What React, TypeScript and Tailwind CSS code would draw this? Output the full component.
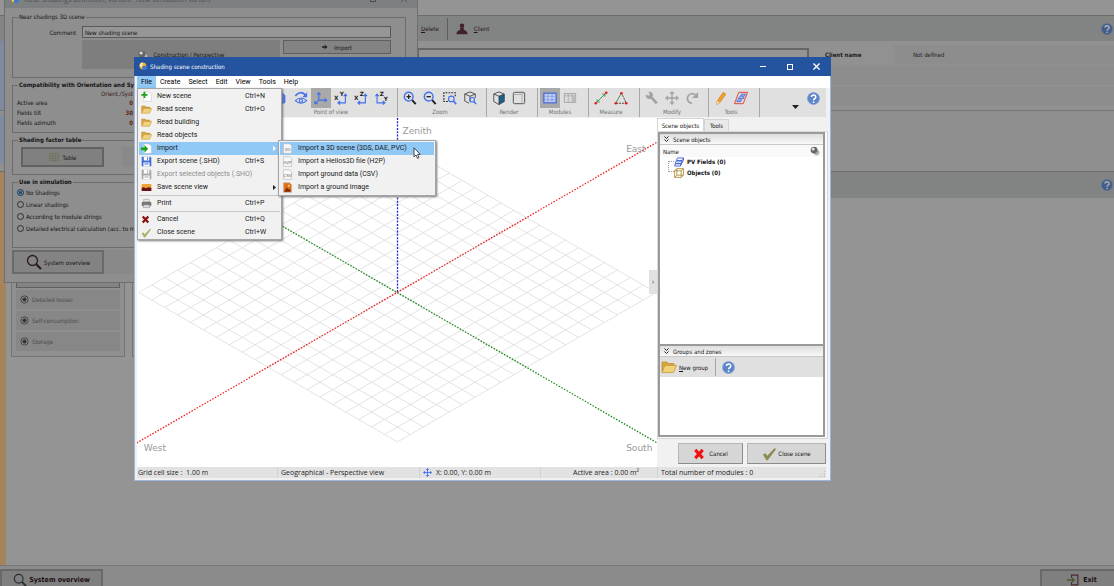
import { ReactNode } from "react"
import clsx from "clsx"

const TAHOMA = "font-['DejaVu_Sans_Condensed','DejaVu_Sans',sans-serif] text-[6px]"
const SEGOE = "font-['Open_Sans','Noto_Sans',sans-serif] text-[7px]"
const MENU = "font-[Roboto,'Open_Sans',sans-serif] text-[7px]"

/* ---------- icons ---------- */

function Icon({ children, className = "size-3.5", box = 16 }: { children: ReactNode; className?: string; box?: number }) {
  return (
    <svg
      className={clsx("shrink-0", className)}
      viewBox={`0 0 ${box} ${box}`}
      fill="none"
      stroke="currentColor"
      strokeWidth={1.3}
      aria-hidden="true"
    >
      {children}
    </svg>
  )
}

const HelpIcon = ({ className = "size-3" }: { className?: string }) => (
  <Icon className={className}>
    <circle cx="8" cy="8" r="7.4" fill="#5d86c8" stroke="#8aa6d2" strokeWidth="1" />
    <path d="M5.4 6.2a2.7 2.5 0 1 1 4 2.1C8.500 8.900 8.100 9.300 8.100 10.300M8.100 11.700v1.700" stroke="#fff" strokeWidth="1.900" />
  </Icon>
)

const AppIcon = ({ className = "size-[9px]" }: { className?: string }) => (
  <Icon className={className}>
    <circle cx="7" cy="7" r="6" fill="#f2ab2e" stroke="none" />
    <path d="M7 1a6 6 0 0 0-6 6l3 3 3-4z" fill="#fbe3a0" stroke="none" />
    <path d="M6 7h9v4a5 5 0 0 1-9 1z" fill="#3a78c8" stroke="none" />
  </Icon>
)

const SphereIcon = ({ className = "size-2.5" }: { className?: string }) => (
  <Icon className={className}>
    <circle cx="10.500" cy="10.500" r="4.500" fill="#b5b5b5" stroke="none" />
    <circle cx="6.500" cy="6.500" r="5.500" fill="#666" stroke="none" />
    <circle cx="5" cy="4.800" r="2.500" fill="#ddd" stroke="none" />
  </Icon>
)

const MagnifierIcon = ({ className = "size-4" }: { className?: string }) => (
  <Icon className={className}>
    <circle cx="6.500" cy="6.500" r="5" strokeWidth="1.300" />
    <path d="M10.200 10.200l4.800 4.800" strokeWidth="2.200" />
  </Icon>
)

const FolderIcon = ({ className = "size-[11px]" }: { className?: string }) => (
  <Icon className={className}>
    <path d="M1 13V3h5l1.500 1.500H13V7" fill="#d9a441" stroke="#c08f30" strokeWidth=".8" />
    <path d="M1 13.500L4 6.500h11.500l-3 7z" fill="#f0d27c" stroke="#c8993a" strokeWidth=".8" />
  </Icon>
)

const NewSceneIcon = () => (
  <Icon className="size-[11px]">
    <path d="M4 1.500h8l3 3V15H4z" fill="#fff" stroke="#c4c4c4" strokeWidth=".8" />
    <path d="M5 1v9M.5 5.500h9" stroke="#1fa01f" strokeWidth="2.600" />
  </Icon>
)

const ImportIcon = () => (
  <Icon className="size-[11px]">
    <path d="M4 1.500h8l3 3V15H4z" fill="#fff" stroke="#c4c4c4" strokeWidth=".8" />
    <path d="M0 6.500h5V3l5.500 5.500L5 14v-3.500H0z" fill="#1fa01f" stroke="none" />
  </Icon>
)

const FloppyIcon = ({ className }: { className?: string }) => (
  <Icon className={clsx("size-[11px]", className)}>
    <path d="M1 1h12.500L15 2.500V15H1z" fill="currentColor" stroke="none" />
    <path d="M4 1h8v5.500H4zM3.500 9.500h9V15h-9z" fill="#fff" stroke="none" />
    <path d="M9.500 2v3.500M5 11.500h6" strokeWidth="1.500" />
  </Icon>
)

const PictureIcon = () => (
  <Icon className="size-[11px]">
    <path d="M1 3h14v10H1z" fill="#f0a030" stroke="none" />
    <path d="M1 8.500l3-1 3 1.500 4-1.500 4 1V13H1z" fill="#6b1414" stroke="none" />
  </Icon>
)

const PrinterIcon = () => (
  <Icon className="size-[11px]">
    <path d="M4 2h8v4H4z" fill="#e8e8e8" stroke="#999" strokeWidth=".8" />
    <rect x="1" y="5.500" width="14" height="6.500" rx="2" fill="#777" stroke="none" />
    <path d="M3.500 10h9v4h-9z" fill="#ddd" stroke="#888" strokeWidth=".8" />
  </Icon>
)

const CrossIcon = ({ className }: { className?: string }) => (
  <Icon className={className}>
    <path d="M3 2.500l10 11M13 2.500l-10 11" strokeWidth="4" />
  </Icon>
)

const CheckIcon = ({ className }: { className?: string }) => (
  <Icon className={className}>
    <path d="M1 8.500l3-1.500 2 3L14.500 1 16 2.500 6.500 15H5z" fill="currentColor" stroke="none" />
  </Icon>
)

const FileTag = ({ tag }: { tag: string }) => (
  <Icon className="size-[11px]">
    <path d="M2 1h9l3 3v11H2z" fill="#f7f7f7" stroke="#bbb" strokeWidth="1" />
    <text x="8" y="11.500" textAnchor="middle" fontSize="6" fill="#666" stroke="none" fontFamily="DejaVu Sans">{tag}</text>
  </Icon>
)

const GroundImageIcon = () => (
  <Icon className="size-[11px]">
    <path d="M2 1h9l3 3v11H2z" fill="#e07018" stroke="#c9b9a9" strokeWidth="1" />
    <path d="M3 14l4-6 3 3 2-1.500V14z" fill="#7c2b10" stroke="none" />
    <circle cx="10" cy="5.500" r="1.500" fill="#ffd27a" stroke="none" />
  </Icon>
)

const UserIcon = () => (
  <Icon className="size-3 text-[#3f2329]">
    <circle cx="8" cy="3.800" r="3" fill="currentColor" stroke="none" />
    <path d="M5 6.800h6L10 9q5 1 5.500 6H.5Q1 10 6 9z" fill="currentColor" stroke="none" />
  </Icon>
)

const ExitIcon = () => (
  <Icon className="size-3">
    <path d="M6 5V1.500h8.500v13H6V11" stroke="#4a2a2a" strokeWidth="1.500" />
    <path d="M0 8h9M6.500 5L9.500 8l-3 3" stroke="#4f5630" strokeWidth="1.800" />
  </Icon>
)

const PvFieldsIcon = () => (
  <Icon className="size-2.5 text-[#2d4fd0]">
    <path d="M5.500 1.500H15l-1.500 4H4zM3.500 6.500H13L11.500 10H2zM2 11h9.500L10 14.500H1zM15 1.500v4L10 14.500" strokeWidth="1.300" />
  </Icon>
)

const ObjectsIcon = () => (
  <Icon className="size-2.5 text-[#a8872c]">
    <path d="M1 4.500h10.500V15H1zM1 4.500L4.500 1H15v10.500L11.500 15M15 1l-3.500 3.500M4.500 1v10.500H15M4.500 11.500L1 15" strokeWidth="1.300" />
  </Icon>
)

const MoveIcon = ({ className = "size-3.5" }: { className?: string }) => (
  <Icon className={className}>
    <path d="M8 2v12M2 8h12" strokeWidth="1.600" />
    <path d="M8 0l3 3.500H5zM8 16l3-3.500H5zM0 8l3.500-3v6zM16 8l-3.500-3v6z" fill="currentColor" stroke="none" />
  </Icon>
)

const axisText = { fontSize: 6.5, fill: "#222", stroke: "none", fontFamily: "DejaVu Sans", fontWeight: 700 }

function AxisIcon({ a, b, flip }: { a: string; b: string; flip?: boolean }) {
  return (
    <Icon>
      <g className="text-[#4470ea]">
        {flip ? (
          <path d="M3.500 4v9.500H12M1.500 6l2-2.500 2 2.500M10 11.500l2.500 2-2.500 2" />
        ) : (
          <path d="M13 4v9.500H5M11 6l2-2.500L15 6M7 11.500l-2.500 2 2.500 2" />
        )}
      </g>
      <text x={6.500} y="5.500" {...axisText}>{b}</text>
      <text x={flip ? 11 : 0} y={flip ? 11 : 10.500} {...axisText}>{a}</text>
    </Icon>
  )
}

const povIcons = [
  {
    label: "Rotate",
    icon: <Icon className="size-3.5 text-[#4470ea]"><path d="M3 3l2 0v4l5-5 3 3v8l-3 2H5z" fill="currentColor" stroke="none" /></Icon>,
  },
  {
    label: "Orbit",
    icon: (
      <Icon className="size-3.5 text-[#4470ea]">
        <path d="M1.500 5.500Q7-1 13 4.500" strokeWidth="2" />
        <path d="M15 1.500V7H9.500z" fill="currentColor" stroke="none" />
        <path d="M1.500 11Q8 5 14.500 11 8 17 1.500 11z" strokeWidth="1.200" />
        <circle cx="8" cy="11" r="1.800" />
      </Icon>
    ),
  },
  {
    label: "Perspective",
    active: true,
    icon: (
      <Icon className="size-3.5 text-[#4470ea]">
        <path d="M5.500 2.500v8h8.500M5.500 10.500l-4 3.500M3.500 4.500l2-2.500 2 2.500M12 8.500l2.500 2-2.500 2M1 11.500V14.500h3.200" />
      </Icon>
    ),
  },
  { label: "Top view", icon: <AxisIcon a="X" b="Y" /> },
  { label: "Front view", icon: <AxisIcon a="X" b="Z" /> },
  { label: "Side view", icon: <AxisIcon a="Y" b="Z" flip /> },
]

const Lens = ({ children }: { children: ReactNode }) => (
  <Icon>
    <circle cx="6.500" cy="6.500" r="5" stroke="#4470ea" strokeWidth="1.600" />
    <path d="M10.500 10.500l4 4.500" stroke="#222" strokeWidth="2.200" />
    {children}
  </Icon>
)

const zoomIcons = [
  { label: "Zoom in", icon: <Lens><path d="M6.500 4v5M4 6.500h5" stroke="#222" strokeWidth="1.500" /></Lens> },
  { label: "Zoom out", icon: <Lens><path d="M4 6.500h5" stroke="#222" strokeWidth="1.500" /></Lens> },
  {
    label: "Zoom to window",
    icon: (
      <Icon>
        <path d="M5.500 12H1V2h13v4" stroke="#222" strokeDasharray="2 1.300" />
        <circle cx="9.500" cy="9" r="3.200" stroke="#4470ea" />
        <path d="M12 11.500l3 3.500" stroke="#4470ea" strokeWidth="1.800" />
      </Icon>
    ),
  },
  {
    label: "Zoom to scene",
    icon: (
      <Icon>
        <path d="M7 14L2 11.500v-8L8 1l6 2.500V8M2 3.500L8 6l6-2.500M8 6v6" stroke="#444" strokeWidth="1" />
        <circle cx="10.500" cy="10" r="2.600" stroke="#4470ea" />
        <path d="M12.500 12l2.500 3" stroke="#4470ea" strokeWidth="1.600" />
      </Icon>
    ),
  },
]

const renderIcons = [
  {
    label: "Shaded",
    icon: (
      <Icon>
        <path d="M8 6l6-2.500v8.500L8 15.500z" fill="#17638c" stroke="none" />
        <path d="M2 3.500L8 1l6 2.500v8.500l-6 3.500-6-3.500zM2 3.500l6 2.500v9.500M8 6l6-2.500" stroke="#333" strokeWidth=".9" />
      </Icon>
    ),
  },
  {
    label: "Wireframe",
    icon: (
      <Icon>
        <rect x="1.500" y="1.500" width="13" height="13" rx="1.500" stroke="#444" strokeWidth="1" />
        <path d="M1.500 4h10v10.500M11.500 4l3-2.500" stroke="#999" strokeWidth=".8" />
      </Icon>
    ),
  },
]

const moduleIcons = [
  {
    label: "Show modules",
    active: true,
    icon: (
      <Icon>
        <rect x="1" y="2.500" width="14" height="11" fill="#c3d0f3" stroke="#3b63d8" />
        <path d="M1 6h14M1 10h14M5.700 2.500v11M10.300 2.500v11" stroke="#6d8be0" strokeWidth=".7" />
      </Icon>
    ),
  },
  {
    label: "Module layout",
    icon: (
      <Icon>
        <rect x="1.500" y="3" width="13" height="10" fill="#dcdcdc" stroke="#a2a2a2" strokeWidth="1" />
        <path d="M1.500 5.500h13M6 3v10M10.500 3v10" stroke="#a2a2a2" strokeWidth=".8" />
        <path d="M10.500 5.500h4V13h-4z" fill="#bbb" stroke="none" />
      </Icon>
    ),
  },
]

const Dots = ({ points }: { points: number[][] }) => (
  <>
    {points.map(([x, y]) => (
      <circle key={`${x}-${y}`} cx={x} cy={y} r="1.500" fill="#e81c1c" stroke="none" />
    ))}
  </>
)

const measureIcons = [
  {
    label: "Measure distance",
    icon: (
      <Icon>
        <path d="M3 13L13 3M3.500 9.500V12.500h3M9.500 3.500h3v3" stroke="#2d8a3c" strokeWidth="1" />
        <Dots points={[[2, 14], [14, 2]]} />
      </Icon>
    ),
  },
  {
    label: "Measure angle",
    icon: (
      <Icon>
        <path d="M2 14L8.500 2" stroke="#2d8a3c" strokeWidth="1" />
        <path d="M8.500 2L14 14H2" stroke="#222" strokeDasharray="2 1.200" strokeWidth="1" />
        <Dots points={[[2, 14], [8.5, 2.5], [14, 14]]} />
      </Icon>
    ),
  },
]

const modifyIcons = [
  {
    label: "Settings",
    icon: (
      <Icon className="size-3.5 text-[#a3a3a3]">
        <path d="M7 7l6.500 7" strokeWidth="3" />
        <path d="M1 4l3 1.500L5.500 4 4 1a4 4 0 0 1 5 5L6 9a4 4 0 0 1-5-5z" fill="currentColor" stroke="none" />
      </Icon>
    ),
  },
  { label: "Move", icon: <MoveIcon className="size-3.5 text-[#a3a3a3]" /> },
  {
    label: "Turn",
    icon: (
      <Icon className="size-3.5 text-[#a3a3a3]">
        <path d="M8 14A5.500 5.500 0 1 1 12 4.500" strokeWidth="2" />
        <path d="M15 1v7H8z" fill="currentColor" stroke="none" />
      </Icon>
    ),
  },
]

const toolIcons = [
  {
    label: "Edit",
    icon: (
      <Icon>
        <path d="M10.500 1.500l3 2-7 10L3 15.500l.5-4z" fill="#efa02c" stroke="#c67c1c" strokeWidth=".7" />
        <path d="M3 15.500l.5-4 3 2z" fill="#f5ddb0" stroke="none" />
      </Icon>
    ),
  },
  {
    label: "Layout zones",
    icon: (
      <Icon>
        <path d="M5.500 1.500h10l-5 13h-10z" stroke="#e04434" strokeWidth="1.100" />
        <path d="M8.500 3.500h4.500l-.8 2H7.700zM6 6.800h5.500l-.8 2H5.200zM4 10.200h4.500l-.8 2H3.200z" fill="#dfe7fc" stroke="#2d4fd0" strokeWidth=".9" />
      </Icon>
    ),
  },
]

/* ---------- toolbar ---------- */

type Tool = { label: string; icon: ReactNode; active?: boolean }

function ToolGroup({ title, tools, className = "pl-0.5 pr-1.5" }: { title: string; tools: Tool[]; className?: string }) {
  return (
    <div className="flex h-full shrink-0 border-r border-[#a8a8a8]">
      <div className={clsx("flex flex-col items-center", className)}>
        <div className="flex">
          {tools.map(tool => (
            <button
              key={tool.label}
              title={tool.label}
              className={clsx("flex h-5 w-5 items-center justify-center", tool.active && "bg-[#a9a9a9]")}
            >
              {tool.icon}
            </button>
          ))}
        </div>
        <span className="leading-[8px] text-[#707070]">{title}</span>
      </div>
    </div>
  )
}

function Toolbar() {
  return (
    <div className={clsx("mr-1 flex h-[29px] items-center bg-[#e0e0e0]", TAHOMA)}>
      <div className="w-[130px] shrink-0" />
      <ToolGroup title="Point of view" tools={povIcons} className="pr-1.5 pl-1" />
      <ToolGroup title="Zoom" tools={zoomIcons} />
      <ToolGroup title="Render" tools={renderIcons} className="pr-2 pl-0.5" />
      <ToolGroup title="Modules" tools={moduleIcons} className="pr-2 pl-0.5" />
      <ToolGroup title="Measure" tools={measureIcons} className="pr-2 pl-0.5" />
      <ToolGroup title="Modify" tools={modifyIcons} className="pr-1.5 pl-0.5" />
      <ToolGroup title="Tools" tools={toolIcons} className="pr-2 pl-0.5" />
      <div className="flex grow items-center justify-end gap-2 pr-1.5">
        <button title="More" className="mt-2">
          <svg className="h-1 w-[7px]" viewBox="0 0 7 4"><path d="M0 0h7L3.500 4z" fill="#222" /></svg>
        </button>
        <button title="Help" className="mb-2"><HelpIcon className="size-[13px]" /></button>
      </div>
    </div>
  )
}

/* ---------- menus ---------- */

type Entry = { label: string; icon: ReactNode; keys?: string; disabled?: boolean; open?: boolean; sub?: boolean }

const fileMenu: Entry[][] = [
  [
    { label: "New scene", icon: <NewSceneIcon />, keys: "Ctrl+N" },
    { label: "Read scene", icon: <FolderIcon />, keys: "Ctrl+O" },
    { label: "Read building", icon: <FolderIcon /> },
    { label: "Read objects", icon: <FolderIcon /> },
    { label: "Import", icon: <ImportIcon />, open: true, sub: true },
    { label: "Export scene (.SHD)", icon: <FloppyIcon className="text-[#3c6cd4]" />, keys: "Ctrl+S" },
    { label: "Export selected objects (.SHO)", icon: <FloppyIcon className="text-[#a8a8a8]" />, disabled: true },
    { label: "Save scene view", icon: <PictureIcon />, sub: true },
  ],
  [{ label: "Print", icon: <PrinterIcon />, keys: "Ctrl+P" }],
  [
    { label: "Cancel", icon: <CrossIcon className="size-[9px] text-[#8c1010]" />, keys: "Ctrl+Q" },
    { label: "Close scene", icon: <CheckIcon className="size-[10px] text-[#a3b560]" />, keys: "Ctrl+W" },
  ],
]

const importMenu: Entry[] = [
  { label: "Import a 3D scene (3DS, DAE, PVC)", icon: <FileTag tag="3D" />, open: true },
  { label: "Import a Helios3D file (H2P)", icon: <FileTag tag="H2P" /> },
  { label: "Import ground data (CSV)", icon: <FileTag tag="CSV" /> },
  { label: "Import a ground image", icon: <GroundImageIcon /> },
]

function MenuItem({ item }: { item: Entry }) {
  return (
    <button
      disabled={item.disabled}
      className={clsx(
        "flex h-[13px] w-full items-center text-left",
        item.open && "bg-[#90c8f6]",
        item.disabled ? "text-[#8d8d8d]" : "text-[#1a1a1a]"
      )}
    >
      <span className="flex w-[18px] shrink-0 justify-start pl-0.5">{item.icon}</span>
      <span className="grow whitespace-nowrap">{item.label}</span>
      {item.keys && <span className="w-[35px] shrink-0">{item.keys}</span>}
      {item.sub && (
        <svg className="mr-1 h-[5px] w-[3px]" viewBox="0 0 3 5">
          <path d="M0 0l3 2.500L0 5z" fill={item.open ? "#fff" : "#222"} />
        </svg>
      )}
    </button>
  )
}

function FileMenu() {
  return (
    <div className="absolute left-0 top-full z-20 w-[145px] border border-[#a5a5a5] bg-[#f1f1f1] px-px pt-px shadow-[1px_1px_2px_#777]">
      {fileMenu.map((section, i) => (
        <div key={i} className={clsx(i > 0 && "mt-px border-t border-[#c9c9c9] pt-px")}>
          {section.map(item => <MenuItem key={item.label} item={item} />)}
        </div>
      ))}
      <div className="absolute left-[140px] top-[51px] w-[158px] border border-[#a5a5a5] bg-[#f1f1f1] p-px shadow-[1px_1px_2px_#777]">
        {importMenu.map(item => <MenuItem key={item.label} item={item} />)}
      </div>
    </div>
  )
}

function MenuBar() {
  return (
    <nav className={clsx("relative flex h-3 items-stretch bg-white text-black", MENU)}>
      {["File", "Create", "Select", "Edit", "View", "Tools", "Help"].map(name => (
        <button key={name} className={clsx("px-1 leading-3", name === "File" && "bg-[#90c8f6]")}>{name}</button>
      ))}
      <FileMenu />
    </nav>
  )
}

/* ---------- 3D view ---------- */

const CELLS = 10

function SceneView() {
  const steps = Array.from({ length: CELLS * 2 + 1 }, (_, i) => i - CELLS)
  const dx = 12.9
  const dy = 7.45
  const at = (u: number, v: number) => `${260 + (u + v) * dx} ${174 + (v - u) * dy}`
  const label = { fontSize: 9, fill: "#999", fontFamily: "DejaVu Sans" }
  return (
    <div className="relative min-w-0 grow bg-white">
      <svg className="size-full" viewBox="0 0 519 348" preserveAspectRatio="xMidYMid slice" fill="none">
        {steps.map(i => (
          <path
            key={i}
            d={`M${at(i, -CELLS)}L${at(i, CELLS)}M${at(-CELLS, i)}L${at(CELLS, i)}`}
            stroke="#dcdcdc"
            strokeWidth="0.800"
          />
        ))}
        <path d="M260 0V174" stroke="#2222d8" strokeWidth="1.300" strokeDasharray="2 1.300" />
        <path d="M0 24L519 324" stroke="#1c8c1c" strokeWidth="1.300" strokeDasharray="1.500 1.500" />
        <path d="M0 324L519 24" stroke="#f02020" strokeWidth="1.300" strokeDasharray="1.500 1.500" />
        <text x="265" y="16" {...label}>Zenith</text>
        <text x="488" y="34" {...label}>East</text>
        <text x="7" y="332" {...label}>West</text>
        <text x="488" y="332" {...label}>South</text>
      </svg>
      <button title="Collapse panel" className="absolute right-0 top-[152px] h-6 w-2 bg-[#e1e1e1] text-[7px] leading-6 text-[#555]">›</button>
    </div>
  )
}

/* ---------- side panel ---------- */

function SectionHeader({ children }: { children: ReactNode }) {
  return (
    <h3 className="flex h-[11px] items-center gap-1 border-b border-[#c8c8c8] bg-linear-to-b from-[#dedede] to-[#f8f8f8] pl-1">
      <svg className="h-1.5 w-[5px]" viewBox="0 0 5 6" fill="none" stroke="#222">
        <path d="M.5 .5l2 2 2-2M.5 3.500l2 2 2-2" />
      </svg>
      {children}
    </h3>
  )
}

function PushButton({ children, className }: { children: ReactNode; className?: string }) {
  return (
    <button className={clsx("flex items-center justify-center border border-r-[#8c8c8c] border-b-[#8c8c8c] border-l-[#b5b5b5] border-t-[#b5b5b5] bg-[#d6d6d6]", className)}>
      {children}
    </button>
  )
}

function SidePanel() {
  return (
    <aside className={clsx("flex w-[173px] shrink-0 flex-col bg-[#f1f1f1] text-[#111]", TAHOMA)}>
      <div className="flex h-[13px] items-end">
        <button className="h-[13px] w-[47px] border border-b-0 border-[#d5d5d5] bg-white">Scene objects</button>
        <button className="h-3 w-[25px] border border-b-0 border-[#d5d5d5] bg-[#e9e9e9]">Tools</button>
      </div>
      <div className="mr-0.5 flex grow flex-col border border-[#d9d9d9] bg-[#fafafa] pr-0.5 pb-px">
        <section className="flex grow flex-col border-2 border-[#9a9a9a] bg-white">
          <SectionHeader>Scene objects</SectionHeader>
          <div className="flex h-3 items-center justify-between bg-[#f9f9f9] px-[3px]">
            <span>Name</span>
            <SphereIcon />
          </div>
          <ul className="relative -mt-px pl-[14px] font-bold">
            <li className="flex h-[11px] items-center gap-[3px]"><PvFieldsIcon />PV Fields (0)</li>
            <li className="flex h-[11px] items-center gap-[3px]"><ObjectsIcon />Objects (0)</li>
            <li className="absolute left-2 top-[5px] h-[11px] w-1.5 border-y border-l border-dotted border-[#999]" aria-hidden="true" />
          </ul>
        </section>
        <section className="flex h-[91px] flex-col border-2 border-t-0 border-[#9a9a9a] bg-white">
          <SectionHeader>Groups and zones</SectionHeader>
          <div className="flex h-5 items-center bg-[#e0e0e0] pl-px">
            <button className="flex h-[18px] items-center gap-0.5 border-r border-[#a5a5a5] pr-[7px]">
              <FolderIcon className="size-4" />
              <span><u>N</u>ew group</span>
            </button>
            <button title="Help" className="ml-1.5"><HelpIcon className="size-[13px]" /></button>
          </div>
        </section>
      </div>
      <div className="flex justify-end gap-1 pt-1 pr-1 pb-[3px]">
        <PushButton className="h-[21px] w-[65px] gap-1"><CrossIcon className="size-3 text-[#f01010]" />Cancel</PushButton>
        <PushButton className="h-[21px] w-[79px] gap-0.5"><CheckIcon className="size-3.5 text-[#8e8b52]" />Close scene</PushButton>
      </div>
    </aside>
  )
}

function StatusBar() {
  return (
    <footer className={clsx("mr-1 mb-0.5 flex h-[11px] items-center bg-[#e2e2e2] leading-[11px] text-[#222]", SEGOE)}>
      <span className="w-[141px] shrink-0 border-r border-[#d2d2d2] pl-px">Grid cell size :&nbsp; 1.00 m</span>
      <span className="w-[142px] shrink-0 border-r border-[#d2d2d2] pl-[3px]">Geographical - Perspective view</span>
      <span className="w-[13px] shrink-0 pl-[3px]"><MoveIcon className="size-[9px] text-[#4470ea]" /></span>
      <span className="grow border-r border-[#d2d2d2] pl-[3px]">X: 0.00, Y: 0.00 m</span>
      <span className="w-[117px] shrink-0 border-r border-[#d2d2d2] pr-[18px] text-right">Active area : 0.00 m²</span>
      <span className="flex w-[168px] shrink-0 items-end justify-between pl-[3px]">
        Total number of modules : 0
        <svg className="size-2" viewBox="0 0 8 8" fill="#b8b8b8">
          <path d="M6 1h1v1H6zM6 3.500h1v1H6zM3.500 3.500h1v1h-1zM6 6h1v1H6zM3.500 6h1v1h-1zM1 6h1v1H1z" />
        </svg>
      </span>
    </footer>
  )
}

function SceneWindow() {
  return (
    <div className="absolute left-[134px] top-[57px] z-20 flex h-[424px] w-[697px] flex-col border border-[#9db6dc] bg-[#f1f1f1]">
      <header className={clsx("-mx-px -mt-px flex h-[19px] shrink-0 items-center bg-[#2454a0] pr-px pl-[5px] text-white", TAHOMA)}>
        <AppIcon />
        <h1 className="ml-0.5 grow">Shading scene construction</h1>
        <button title="Minimize" className="flex w-[27px] justify-center"><span className="h-px w-1.5 bg-white" /></button>
        <button title="Maximize" className="flex w-[27px] justify-center"><span className="size-1.5 border border-white" /></button>
        <button title="Close" className="flex w-[27px] justify-center">
          <Icon className="size-[7px]"><path d="M1 1l14 14M15 1L1 15" strokeWidth="3" /></Icon>
        </button>
      </header>
      <div className="flex min-h-0 grow flex-col pl-0.5">
        <MenuBar />
        <Toolbar />
        <div className="mt-px flex min-h-0 grow">
          <SceneView />
          <SidePanel />
        </div>
        <StatusBar />
      </div>
      <svg className="absolute left-[278px] top-[89px] z-30 h-3 w-2" viewBox="0 0 8 12">
        <path d="M1 .8v9l2-1.800 1.500 3.300 1.500-.7-1.500-3.200H7.300z" fill="#fff" stroke="#222" strokeWidth=".8" />
      </svg>
    </div>
  )
}

/* ---------- shadings definition window ---------- */

function Group({ title, bold, className, children }: { title: string; bold?: boolean; className?: string; children: ReactNode }) {
  return (
    <fieldset className={clsx("border border-[#6c6c6c] px-1", className)}>
      <legend className={clsx("ml-px px-px leading-[8px]", bold && "font-bold")}>{title}</legend>
      {children}
    </fieldset>
  )
}

const results = [
  { name: "Active area", value: "0" },
  { name: "Fields tilt", value: "30" },
  { name: "Fields azimuth", value: "0" },
]

const simulationModes = [
  "No Shadings",
  "Linear shadings",
  "According to module strings",
  "Detailed electrical calculation (acc. to module layout)",
]

function ShadingsWindow() {
  return (
    <div className={clsx("absolute left-1 top-0 z-10 w-[414px] border border-t-0 border-[#6f6f6f] bg-[#8e8e8e] text-[#141414]", TAHOMA)}>
      <header className="flex h-2 items-start gap-[5px] overflow-hidden bg-[#7d8080] pl-1.5 text-[#4c4f50]">
        <AppIcon className="-mt-1 size-2" />
        <span className={clsx("-mt-1.5 grow leading-3", SEGOE)}>Near Shadings definition, Variant "New simulation variant"</span>
        <span className="-mt-1 mr-5 size-1.5 border border-[#4c4f50]" />
        <Icon className="-mt-1 mr-2.5 size-1.5"><path d="M1 1l14 14M15 1L1 15" strokeWidth="2.500" /></Icon>
      </header>
      <div className="flex flex-col px-[7px] pt-[5px] pb-2">
        <Group title="Near shadings 3D scene" className="h-[65px] w-[394px]">
          <div className="flex items-center gap-1.5 pt-[5px] pr-2.5">
            <label htmlFor="comment" className="w-[59px] text-right">Comment</label>
            <input id="comment" defaultValue="New shading scene" className="h-3 grow border border-[#5a5a5a] bg-[#969696] px-0.5" />
          </div>
          <div className="mt-0.5 flex gap-[3px] pr-2.5 pl-[65px]">
            <button className="flex h-[29px] grow items-center justify-center gap-1.5 bg-[#7e7e7e]"><SphereIcon />Construction / Perspective</button>
            <button className="flex h-3.5 w-[108px] items-center justify-center gap-1.5 border border-[#5f5f5f] bg-[#838383]">
              <Icon className="size-1.5"><path d="M0 6h7V2l8 6-8 6v-4H0z" fill="#222" stroke="none" /></Icon>
              Import
            </button>
          </div>
        </Group>
        <Group title="Compatibility with Orientation and System" bold className="mt-[3px] h-[52px] w-[394px]">
          <table className="w-[116px]">
            <thead>
              <tr><th /><th className="text-right font-normal leading-[9px] text-[#3a1616] whitespace-nowrap">Orient./Syst</th></tr>
            </thead>
            <tbody>
              {results.map(row => (
                <tr key={row.name} className="leading-[10px]">
                  <td>{row.name}</td>
                  <td className="text-right font-bold text-[#5a2418]">{row.value}</td>
                </tr>
              ))}
            </tbody>
          </table>
        </Group>
        <Group title="Shading factor table" bold className="mt-[3px] h-[39px] w-[394px]">
          <div className="flex gap-[18px] pt-[3px] pl-1">
            <button className="flex h-5 w-[83px] items-center justify-center gap-1 border-2 border-[#626262] bg-[#808080]">
              <Icon className="size-2.5 text-[#6c6f52]"><path d="M1 2h14v12H1zM1 6h14M1 10h14M6 2v12M10 2v12" strokeWidth="1" /></Icon>
              Table
            </button>
            <span className="h-5 w-[83px] bg-[#898989]" />
          </div>
        </Group>
        <Group title="Use in simulation" bold className="mt-[3px] h-[70px] w-[394px]">
          {simulationModes.map((mode, i) => (
            <label key={mode} className="flex h-3 items-center gap-0.5 whitespace-nowrap">
              <input
                type="radio"
                name="simulation"
                defaultChecked={i === 0}
                className="size-[7px] appearance-none rounded-full border border-[#2f2f2f] checked:border-[#1b4468] checked:bg-[#1b4468] checked:shadow-[inset_0_0_0_1px_#8e8e8e]"
              />
              {mode}
            </label>
          ))}
        </Group>
        <div className="mt-0.5 flex">
          <button className="flex h-6 w-[92px] items-center justify-center gap-0.5 border-2 border-[#6a6a6a] bg-[#838383]">
            <MagnifierIcon className="size-4 text-[#2c1c1c]" />
            System overview
          </button>
          <span className="grow bg-[#898989]" />
        </div>
      </div>
    </div>
  )
}

/* ---------- project page behind the windows ---------- */

function ProjectPage() {
  return (
    <div className={clsx("flex grow flex-col bg-[#949494] text-[#1d1d1d]", TAHOMA)}>
      <div className="mb-1 h-[11px]" />
      <div className="flex h-[26px] items-center border-t border-[#6c6c6c] bg-[#828483] pl-[421px] text-[#2c1519]">
        <button><u>D</u>elete</button>
        <span className="mx-2 h-[22px] w-px bg-[#5d5d5d]" />
        <button className="flex items-center gap-1.5"><UserIcon /><span><u>C</u>lient</span></button>
        <button title="Help" className="mr-px ml-auto"><HelpIcon className="size-3 brightness-70" /></button>
      </div>
      <div className="flex h-[70px] shrink-0 border-b border-[#747474] bg-[#919191]">
        <div className="h-full w-1 bg-[#7f8aa0]" />
        <input aria-label="Project name" className="mt-[7px] ml-[413px] h-3.5 w-[392px] border-2 border-[#666] bg-[#949494]" />
        <dl className="mt-1 ml-4 grid grow grid-cols-[69px_1fr] content-start gap-y-0.5">
          <dt className="leading-[19px] font-bold">Client name</dt>
          <dd className="h-[19px] bg-[#8d8d8d] pl-[19px] leading-[19px]">Not defined</dd>
          <dd className="col-span-2 h-[19px] bg-[#8d8d8d]" />
          <dd className="col-span-2 h-[19px] bg-[#8d8d8d]" />
        </dl>
      </div>
      <div className="h-[60px] shrink-0 bg-[#8f8f8f]">
        <div className="mt-1 h-12 w-1 bg-[#7f8aa0]" />
      </div>
      <div className="flex h-[27px] shrink-0 items-center justify-end border-t border-[#6c6c6c] bg-[#828483] pr-px">
        <button title="Help"><HelpIcon className="size-3 brightness-70" /></button>
      </div>
      <div className="flex grow">
        <div className="-mt-[26px] w-1.5 bg-[#a5845b]" />
        <div className="ml-[5px] flex gap-[7px]">
          <div className="flex h-[159px] w-[114px] flex-col justify-end gap-0.5 border border-[#757575] bg-[#8f8f8f] px-1 pb-[5px]">
            {["System", "Detailed losses", "Self-consumption", "Storage"].map((name, i) => (
              <button
                key={name}
                className={clsx("flex h-[19px] items-center gap-[3px] pl-1 text-[#4b4b4b]", i === 0 ? "border border-[#5f5f5f] bg-[#838383]" : "bg-[#878787]")}
              >
                <Icon className="size-[9px] text-[#333]">
                  <circle cx="8" cy="8" r="6.500" />
                  <circle cx="8" cy="8" r="3" fill="currentColor" />
                </Icon>
                {name}
              </button>
            ))}
          </div>
          <div className="h-[159px] w-[115px] border border-[#757575]" />
        </div>
      </div>
    </div>
  )
}

export default function App() {
  return (
    <main className="relative flex h-screen flex-col overflow-hidden bg-[#949494]">
      <ProjectPage />
      <footer className="flex h-[21px] shrink-0 items-start justify-between overflow-hidden border-t border-[#787878] bg-[#8b8b8b] pt-[3px] font-['DejaVu_Sans_Condensed','DejaVu_Sans',sans-serif] text-[7px] font-bold text-[#1d1012]">
        <button className="flex h-[22px] w-[103px] shrink-0 items-center justify-center gap-0.5 border-2 border-[#686868] bg-[#7f7f7f]">
          <MagnifierIcon className="size-3.5 text-[#2a2f2f]" />
          System overview
        </button>
        <button className="flex h-[22px] w-[74px] shrink-0 items-center justify-center gap-1 border-2 border-r-0 border-[#686868] bg-[#7f7f7f] pl-2">
          <ExitIcon />
          Exit
        </button>
      </footer>
      <ShadingsWindow />
      <SceneWindow />
    </main>
  )
}
